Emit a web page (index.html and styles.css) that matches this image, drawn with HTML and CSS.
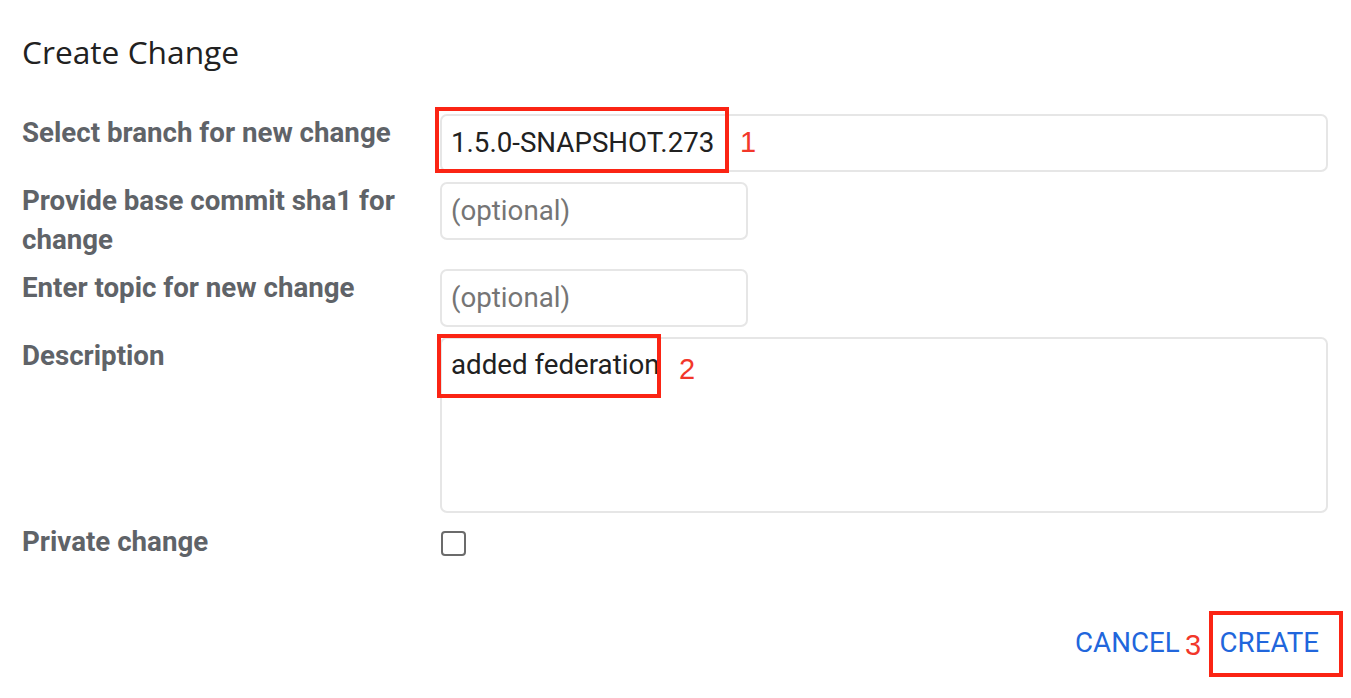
FILE: index.html
```html
<!DOCTYPE html>
<html lang="en">
<head>
<meta charset="utf-8">
<title>Create Change</title>
<link rel="stylesheet" href="styles.css">
</head>
<body>
<div class="dialog">
  <h1 class="title">Create Change</h1>
  <div class="form">
    <div class="label">Select branch for new change</div>
    <div class="field"><div class="input wide">1.5.0-SNAPSHOT.273</div></div>

    <div class="label">Provide base commit sha1 for change</div>
    <div class="field"><div class="input short placeholder">(optional)</div></div>

    <div class="label">Enter topic for new change</div>
    <div class="field"><div class="input short placeholder">(optional)</div></div>

    <div class="label">Description</div>
    <div class="field"><div class="textarea">added federation</div></div>

    <div class="label">Private change</div>
    <div class="field"><span class="checkbox"></span></div>
  </div>
  <div class="actions">
    <span class="btn">CANCEL</span>
    <span class="btn">CREATE</span>
  </div>
</div>

<div class="mark mark1"></div>
<div class="num num1">1</div>
<div class="mark mark2"></div>
<div class="num num2">2</div>
<div class="mark mark3"></div>
<div class="num num3">3</div>
</body>
</html>
```
FILE: styles.css
```css
html, body {
  margin: 0;
  padding: 0;
  background: #ffffff;
}
body {
  position: relative;
  width: 1351px;
  height: 698px;
  overflow: hidden;
  font-family: Roboto, "Liberation Sans", sans-serif;
}
.dialog {
  padding: 33px 24px 0 22px;
}
.title {
  margin: 0;
  font-family: "Open Sans", Roboto, sans-serif;
  font-weight: 400;
  font-size: 31.7px;
  line-height: 37px;
  color: #212121;
}
.form {
  margin-top: 44px;
  display: grid;
  grid-template-columns: 418px 1fr;
  row-gap: 10px;
}
.label {
  font-size: 27.7px;
  font-weight: 700;
  line-height: 38.5px;
  color: #5f6368;
  padding-right: 10px;
}
.field {
  display: flex;
  align-items: flex-start;
}
.input {
  box-sizing: border-box;
  height: 58px;
  border: 2px solid #e6e6e6;
  border-radius: 7px;
  padding: 0 9px;
  font-size: 27.7px;
  line-height: 54px;
  color: #212121;
  white-space: nowrap;
}
.input.wide { width: 888px; }
.input.short { width: 308px; }
.placeholder { color: #757575; }
.textarea {
  box-sizing: border-box;
  width: 888px;
  height: 176px;
  border: 2px solid #e6e6e6;
  border-radius: 7px;
  padding: 9px 9px;
  font-size: 27.7px;
  line-height: normal;
  color: #212121;
}
.checkbox {
  box-sizing: border-box;
  width: 25px;
  height: 25px;
  margin-top: 8px;
  margin-left: 1px;
  border: 2px solid #6b6b6b;
  border-radius: 4px;
}
.actions {
  margin-top: 62px;
  display: flex;
  justify-content: flex-end;
  gap: 24px;
}
.btn {
  font-size: 27.7px;
  line-height: 38.5px;
  color: #2166dc;
  padding: 0 8px;
}
.mark {
  position: absolute;
  box-sizing: border-box;
  border: 4px solid #fb2414;
}
.mark1 { left: 435px; top: 107px; width: 294px; height: 66px; }
.mark2 { left: 437px; top: 334px; width: 224px; height: 64px; }
.mark3 { left: 1209px; top: 611px; width: 134px; height: 66px; }
.num {
  position: absolute;
  font-family: "Liberation Sans", Arial, sans-serif;
  font-weight: 400;
  font-size: 29px;
  line-height: 30px;
  color: #f2372a;
}
.num1 { left: 740px; top: 127px; }
.num2 { left: 679px; top: 354px; }
.num3 { left: 1185px; top: 630px; }
```
